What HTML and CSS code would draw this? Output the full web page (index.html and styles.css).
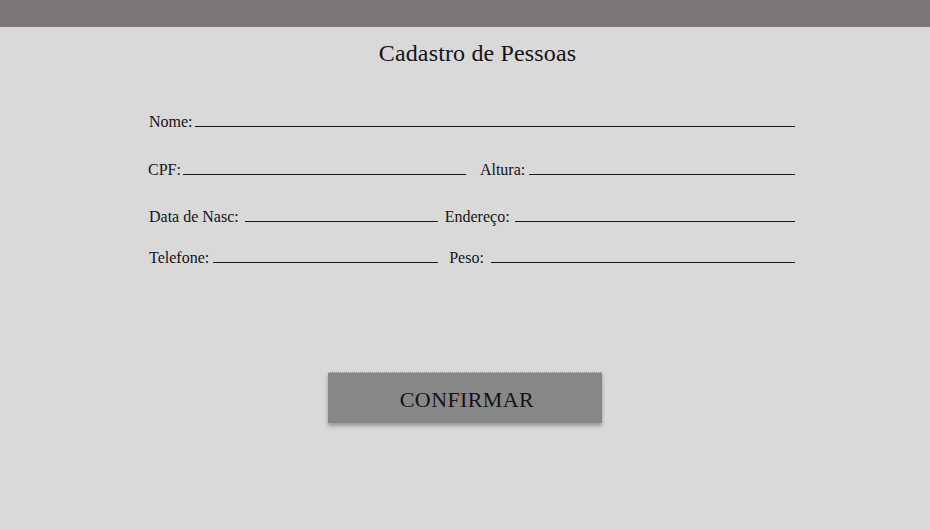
FILE: index.html
```html
<!DOCTYPE html>
<html lang="pt-BR">
<head>
<meta charset="utf-8">
<title>Cadastro de Pessoas</title>
<link rel="stylesheet" href="styles.css">
</head>
<body>
<header class="topbar"></header>
<h1 class="title">Cadastro de Pessoas</h1>
<form class="form">
  <div class="row row-first">
    <label class="lbl">Nome:</label><span class="line line-nome"></span>
  </div>
  <div class="row row-2">
    <label class="lbl">CPF:</label><span class="line line-cpf"></span>
    <label class="lbl lbl-altura">Altura:</label><span class="line line-fill"></span>
  </div>
  <div class="row row-3">
    <label class="lbl">Data de Nasc:</label><span class="line line-data"></span>
    <label class="lbl lbl-end">Endereço:</label><span class="line line-fill"></span>
  </div>
  <div class="row row-4">
    <label class="lbl">Telefone:</label><span class="line line-tel"></span>
    <label class="lbl lbl-peso">Peso:</label><span class="line line-fill"></span>
  </div>
  <div class="actions">
    <button type="button" class="btn">CONFIRMAR</button>
  </div>
</form>
</body>
</html>
```

FILE: styles.css
```css
html, body {
  margin: 0;
  padding: 0;
}
body {
  background: #d9d9d9;
  font-family: "Liberation Serif", "DejaVu Serif", serif;
  color: #141414;
  width: 930px;
  height: 530px;
  overflow: hidden;
}
.topbar {
  height: 27px;
  background: #7b7776;
}
.title {
  margin: 12px 0 0 0;
  font-size: 24px;
  font-weight: normal;
  text-align: center;
  padding-left: 25px;
  line-height: 28px;
  letter-spacing: 0.15px;
}
.form {
  margin: 46px 0 0 148px;
  width: 647px;
}
.row {
  display: flex;
  align-items: baseline;
  font-size: 16px;
  line-height: 18px;
}
.row-2 { margin-top: 30px; }
.row-3 { margin-top: 29px; }
.row-4 { margin-top: 23px; }
.lbl {
  white-space: nowrap;
}
.row-first .lbl,
.row-3 .lbl:first-child,
.row-4 .lbl:first-child {
  margin-left: 1px;
}
.line {
  display: block;
  height: 0;
  border-bottom: 1px solid #1a1a1a;
}
.line-nome { flex: 1; margin-left: 2px; }
.line-cpf { width: 283px; margin-left: 2px; }
.line-data { width: 193px; margin-left: 6px; }
.line-tel { width: 225px; margin-left: 4px; }
.line-fill { flex: 1; }
.lbl-altura { margin-left: 14px; margin-right: 4px; }
.lbl-end { margin-left: 7px; margin-right: 5px; }
.lbl-peso { margin-left: 11px; margin-right: 7px; }
.actions {
  margin-top: 105px;
  margin-left: -148px;
  width: 930px;
  display: flex;
  justify-content: center;
}
.btn {
  width: 274px;
  height: 51px;
  background: #878787;
  border: none;
  border-top: 1px dotted #c4c4c4;
  box-shadow: 0 3px 4px rgba(0, 0, 0, 0.3);
  font-family: "Liberation Serif", "DejaVu Serif", serif;
  font-size: 22px;
  letter-spacing: 0.4px;
  color: #141414;
  padding: 4px 0 0 4px;
  cursor: pointer;
}
```
